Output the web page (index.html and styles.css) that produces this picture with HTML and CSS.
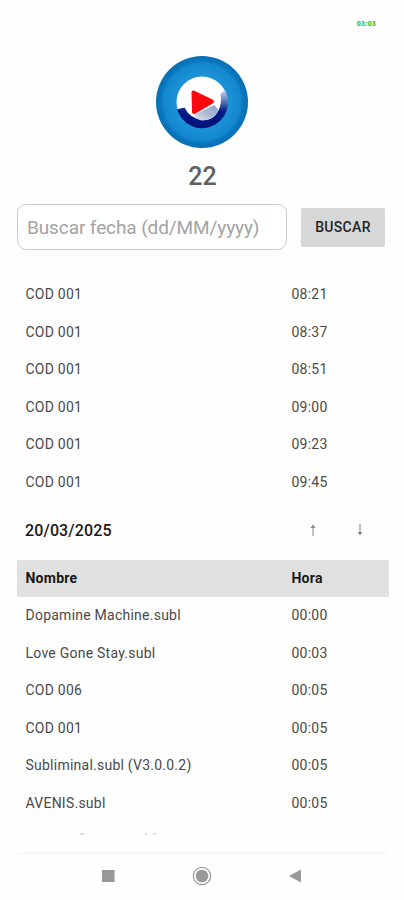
FILE: index.html
```
<!DOCTYPE html>
<html lang="es">
  <head>
    <meta charset="utf-8">
    <title>Historial</title>
    <link rel="stylesheet" href="styles.css">
  </head>
  <body>
    <div class="status"><span>03:03</span></div>
    <svg class="logo" viewBox="0 0 92 92">
      <defs>
        <radialGradient id="disc">
          <stop offset="0.5" stop-color="#1c94d8"/>
          <stop offset="0.83" stop-color="#1588cf"/>
          <stop offset="0.9" stop-color="#0876bd"/>
          <stop offset="1" stop-color="#0a6fb3"/>
        </radialGradient>
        <linearGradient id="shade" x1="0" y1="1" x2="1" y2="0">
          <stop offset="0" stop-color="#e4e9f3"/>
          <stop offset="0.5" stop-color="#a9b8d4"/>
          <stop offset="1" stop-color="#8fa3cb"/>
        </linearGradient>
        <linearGradient id="ring" x1="0" y1="1" x2="0" y2="0">
          <stop offset="0" stop-color="#001078"/>
          <stop offset="0.45" stop-color="#041c86"/>
          <stop offset="1" stop-color="#c4dcf2"/>
        </linearGradient>
      </defs>
      <circle cx="46" cy="46" r="46" fill="url(#disc)"/>
      <circle cx="46" cy="46" r="25.5" fill="#fff"/>
      <path d="M21 53.200A26 26 0 1 0 69 34L64.500 38Q66 47 62.500 54.500Q58 64 47 64Q34 63 28.500 51.500Z" fill="url(#ring)"/>
      <path d="M38 59L58.500 49L62.500 54.500Q58 64 47 64.500Q42 64.500 38 59Z" fill="url(#shade)"/>
      <path d="M37.500 36.500L56 45.500L38 56Z" fill="#fb0710" stroke="#fb0710" stroke-width="4" stroke-linejoin="round"/>
    </svg>
    <h1>22</h1>
    <div class="search">
      <input type="text" placeholder="Buscar fecha (dd/MM/yyyy)">
      <button>BUSCAR</button>
    </div>
    <div class="list">
      <div class="row"><span>COD 001</span><span>08:21</span></div>
      <div class="row"><span>COD 001</span><span>08:37</span></div>
      <div class="row"><span>COD 001</span><span>08:51</span></div>
      <div class="row"><span>COD 001</span><span>09:00</span></div>
      <div class="row"><span>COD 001</span><span>09:23</span></div>
      <div class="row"><span>COD 001</span><span>09:45</span></div>
      <div class="day">
        <h2>20/03/2025</h2>
        <svg class="arrow" viewBox="0 0 8 14"><path d="M4 13V3"/><path class="tip" d="M1.500 5L4 1.500L6.500 5Z"/></svg>
        <svg class="arrow" viewBox="0 0 8 14"><path d="M4 1V11"/><path class="tip" d="M1.500 9L4 12.500L6.500 9Z"/></svg>
      </div>
      <div class="row head"><span>Nombre</span><span>Hora</span></div>
      <div class="row"><span>Dopamine Machine.subl</span><span>00:00</span></div>
      <div class="row"><span>Love Gone Stay.subl</span><span>00:03</span></div>
      <div class="row"><span>COD 006</span><span>00:05</span></div>
      <div class="row"><span>COD 001</span><span>00:05</span></div>
      <div class="row"><span>Subliminal.subl (V3.0.0.2)</span><span>00:05</span></div>
      <div class="row"><span>AVENIS.subl</span><span>00:05</span></div>
      <!-- tops of the next row, cut by the scroll edge -->
      <svg class="cut" viewBox="0 0 372 14"><path d="M63 12h4M128 12h2M136 12h3"/></svg>
    </div>
    <div class="nav">
      <svg viewBox="0 0 20 20"><rect x="4" y="4" width="12.500" height="12" fill="#999"/></svg>
      <svg viewBox="0 0 20 20"><circle cx="10" cy="10" r="8.700" fill="none" stroke="#999" stroke-width="1.200"/><circle cx="10" cy="10" r="6.300" fill="#999"/></svg>
      <svg viewBox="0 0 20 20"><path d="M4 10L16 3.500V16.500Z" fill="#999"/></svg>
    </div>
  </body>
</html>
```

FILE: styles.css
```
* {
  box-sizing: border-box;
}
body {
  font-family: Roboto, "Liberation Sans", sans-serif;
  margin: 0;
  height: 900px;
  overflow: hidden;
  background-color: #fefefe;
  color: #4a4a4a;
}
.status {
  height: 55.5px;
  padding: 20px 28px 0 0;
  text-align: right;
  font-size: 7px;
  line-height: 9px;
  font-weight: 900;
  letter-spacing: 0.2px;
  color: #45c51c;
}
.logo {
  display: block;
  width: 92px;
  height: 92px;
  margin: 0 auto;
}
h1 {
  margin: 13.5px 0 0 1px;
  font-size: 25px;
  line-height: 32px;
  font-weight: 500;
  text-align: center;
  color: #606060;
}
.search {
  display: flex;
  align-items: center;
  gap: 14px;
  margin: 11px 19px 0 17px;
  height: 46px;
}
.search input {
  width: 270px;
  height: 46px;
  padding: 0 9px;
  border: 1px solid #ccc;
  border-radius: 9px;
  background-color: #fff;
  font-family: inherit;
  font-size: 19px;
  letter-spacing: -0.1px;
}
.search input::placeholder {
  color: #a3a3a3;
}
.search button {
  width: 84px;
  height: 39px;
  padding: 0;
  border: none;
  border-radius: 2px;
  background-color: #d6d8d7;
  font-family: inherit;
  font-size: 14px;
  font-weight: 500;
  letter-spacing: 0.3px;
  color: #242424;
}
.list {
  margin: 25.5px 15px 0 17px;
  height: 578.5px;
  overflow: hidden;
}
.row {
  display: grid;
  grid-template-columns: 266px 1fr;
  align-items: center;
  height: 37.5px;
  padding-left: 8.5px;
  font-size: 14px;
  letter-spacing: 0.24px;
}
.day {
  display: flex;
  align-items: center;
  height: 59px;
  padding: 0 25px 0 8px;
}
.day h2 {
  margin: 0 auto 0 0;
  font-size: 16px;
  font-weight: 500;
  letter-spacing: 0.15px;
  color: #181818;
}
.arrow {
  width: 8px;
  height: 14px;
  margin-left: 39px;
  fill: none;
  stroke: #888;
  stroke-width: 1;
}
.arrow .tip {
  fill: #888;
  stroke: none;
}
.head {
  height: 37px;
  background-color: #e0e0e0;
  font-weight: 700;
  color: #181818;
}
.cut {
  display: block;
  width: 372px;
  height: 14px;
  stroke: #bbb;
}
.nav {
  display: flex;
  justify-content: space-between;
  margin: -1.5px 17px 0;
  padding: 12px 82px 0 81px;
  border-top: 1px solid #f3f3f3;
}
.nav svg {
  width: 20px;
  height: 20px;
}
```
